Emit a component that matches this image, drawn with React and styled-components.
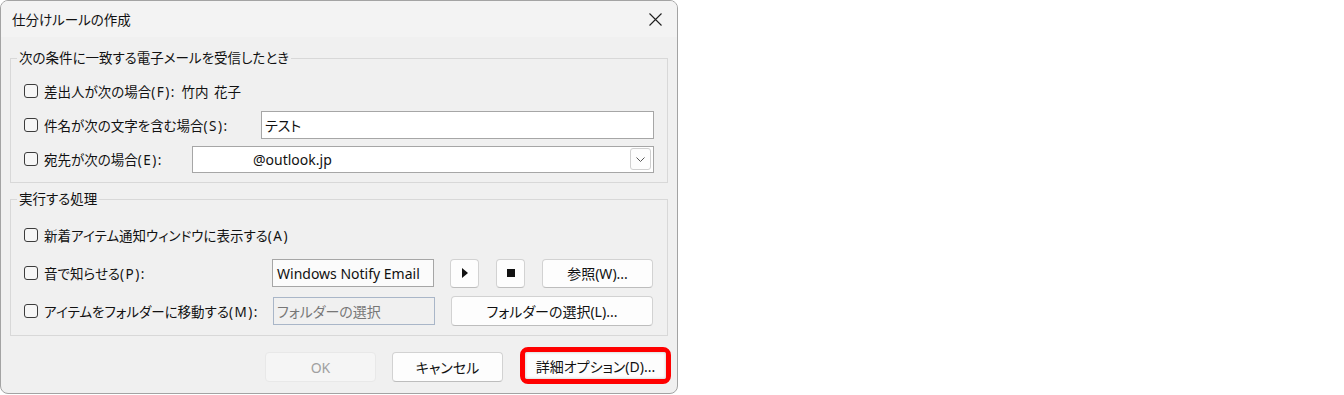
import styled, { createGlobalStyle } from 'styled-components';

const GlobalStyle = createGlobalStyle`
  html, body {
    margin: 0;
    padding: 0;
    background: #ffffff;
  }

  body {
    font-family: "Noto Sans", "Noto Sans CJK JP", sans-serif;
    color: #111111;
  }
`;

const font = `"Noto Sans", "Noto Sans CJK JP", sans-serif`;

const Dialog = styled.div`
  box-sizing: border-box;
  width: 678px;
  height: 394px;
  display: flex;
  flex-direction: column;
  background: #f0f0f0;
  border: 1px solid #a3a3a3;
  border-radius: 8px;
  overflow: hidden;
  font-family: ${font};
  font-size: 13.5px;
  font-feature-settings: "palt";
  color: #111111;
`;

const TitleBar = styled.div`
  height: 36px;
  flex: none;
  display: flex;
  align-items: center;
  justify-content: space-between;
  padding: 0 15px 0 11px;
  background: #f3f3f3;
  font-size: 13.5px;
`;

const CloseButton = styled.span`
  display: flex;
  width: 14px;
  height: 14px;
  align-items: center;
  justify-content: center;
`;

const Body = styled.div`
  flex: none;
  display: flex;
  flex-direction: column;
  gap: 7px;
  padding-top: 12px;
`;

const Group = styled.fieldset`
  margin: 0 9px;
  padding: ${(p) => p.$pad};
  border: 1px solid #d8d8d8;
  display: flex;
  flex-direction: column;
  gap: ${(p) => p.$gap}px;
  min-width: 0;
`;

const Legend = styled.legend`
  margin-left: -7px;
  padding: 0 2px;
  line-height: 18px;
`;

const Row = styled.div`
  height: ${(p) => p.$h}px;
  display: flex;
  align-items: center;
  justify-content: space-between;
`;

const CheckLabel = styled.label`
  display: flex;
  align-items: center;
  gap: 6px;
  white-space: nowrap;
  word-spacing: 2px;
`;

const Acc = styled.span`
  letter-spacing: 1.5px;
`;

const Box = styled.span`
  box-sizing: border-box;
  width: 14px;
  height: 14px;
  border: 1px solid #3c3c3c;
  border-radius: 3px;
  background: #f6f6f6;
  flex: none;
`;

const TextField = styled.div`
  box-sizing: border-box;
  width: ${(p) => p.$w}px;
  height: ${(p) => p.$h || 28}px;
  display: flex;
  align-items: center;
  justify-content: space-between;
  padding: 0 2px 0 ${(p) => p.$indent || 3}px;
  background: ${(p) => (p.$disabled ? '#f0f0f0' : p.$readonly ? '#fbfbfb' : '#ffffff')};
  border: 1px solid ${(p) => (p.$disabled ? '#a9b6c8' : '#a6a6a6')};
  color: ${(p) => (p.$disabled ? '#777777' : '#111111')};
  font-size: 14px;
  white-space: nowrap;
  overflow: hidden;
`;

const DropButton = styled.span`
  box-sizing: border-box;
  width: 21px;
  height: 22px;
  display: flex;
  align-items: center;
  justify-content: center;
  border: 1px solid #d0d0d0;
  border-radius: 3px;
  background: #fdfdfd;
`;

const Controls = styled.div`
  display: flex;
  align-items: center;
  gap: ${(p) => p.$gap || 16}px;
`;

const Button = styled.button`
  box-sizing: border-box;
  width: ${(p) => p.$w}px;
  height: ${(p) => p.$h || 29}px;
  display: flex;
  align-items: center;
  justify-content: center;
  padding: 0;
  background: ${(p) => (p.disabled ? '#f5f5f5' : '#fdfdfd')};
  border: 1px solid ${(p) => (p.disabled ? '#e8e8e8' : '#d2d2d2')};
  border-bottom-color: ${(p) => (p.disabled ? '#e8e8e8' : '#bdbdbd')};
  border-radius: 4px;
  font-family: ${font};
  font-size: 14px;
  font-feature-settings: "palt";
  color: ${(p) => (p.disabled ? '#a0a0a0' : '#111111')};
`;

const Footer = styled.div`
  display: flex;
  justify-content: flex-end;
  align-items: flex-end;
  gap: 16px;
  padding: 11px 6px 0 0;
`;

const Highlight = styled.span`
  display: flex;
  margin: 0 0 -2px 1px;
  border: 5px solid #ff0000;
  border-radius: 8px;
`;

const DetailButton = styled(Button)`
  border: none;
  border-radius: 2px;
  box-shadow: inset 0 0 3px rgba(0, 0, 0, 0.25);
`;

const Check = ({ children }) => (
  <CheckLabel>
    <Box />
    <span>{children}</span>
  </CheckLabel>
);

const CloseIcon = () => (
  <svg width="13" height="13" viewBox="0 0 13 13">
    <path d="M0.5 0.5 L12.5 12.5 M12.5 0.5 L0.5 12.5" stroke="#1f1f1f" strokeWidth="1.1" fill="none" />
  </svg>
);

const Chevron = () => (
  <svg width="9" height="5" viewBox="0 0 9 5">
    <path d="M0.5 0.5 L4.5 4.5 L8.5 0.5" stroke="#555" strokeWidth="1" fill="none" />
  </svg>
);

const PlayIcon = () => (
  <svg width="6" height="10" viewBox="0 0 6 10">
    <path d="M0 0 L6 5 L0 10 Z" fill="#111" />
  </svg>
);

const StopIcon = () => (
  <svg width="8" height="8" viewBox="0 0 8 8">
    <rect width="8" height="8" fill="#111" />
  </svg>
);

const App = () => {
  return (
    <>
      <GlobalStyle />
      <Dialog>
        <TitleBar>
          仕分けルールの作成
          <CloseButton>
            <CloseIcon />
          </CloseButton>
        </TitleBar>

        <Body>
          {/* 条件 */}
          <Group $pad="10px 13px 9px 13px" $gap={6}>
            <Legend>次の条件に一致する電子メールを受信したとき</Legend>
            <Row $h={28}>
              <Check>
                差出人が次の場合<Acc>(F):</Acc> 竹内 花子
              </Check>
            </Row>
            <Row $h={28}>
              <Check>
                件名が次の文字を含む場合<Acc>(S):</Acc>
              </Check>
              <TextField $w={393}>テスト</TextField>
            </Row>
            <Row $h={28}>
              <Check>
                宛先が次の場合<Acc>(E):</Acc>
              </Check>
              <TextField $w={462} $h={27} $indent={60}>
                @outlook.jp
                <DropButton>
                  <Chevron />
                </DropButton>
              </TextField>
            </Row>
          </Group>

          {/* 処理 */}
          <Group $pad="12px 14px 9px 13px" $gap={8}>
            <Legend>実行する処理</Legend>
            <Row $h={30}>
              <Check>
                新着アイテム通知ウィンドウに表示する<Acc>(A)</Acc>
              </Check>
            </Row>
            <Row $h={30}>
              <Check>
                音で知らせる<Acc>(P):</Acc>
              </Check>
              <Controls>
                <TextField $w={162} $readonly $indent={4}>
                  Windows Notify Email
                </TextField>
                <Controls $gap={17}>
                  <Button $w={29}>
                    <PlayIcon />
                  </Button>
                  <Button $w={29}>
                    <StopIcon />
                  </Button>
                  <Button $w={111}>参照(W)...</Button>
                </Controls>
              </Controls>
            </Row>
            <Row $h={30}>
              <Check>
                アイテムをフォルダーに移動する<Acc>(M):</Acc>
              </Check>
              <Controls>
                <TextField $w={162} $disabled $indent={3}>
                  フォルダーの選択
                </TextField>
                <Button $w={202} $h={30}>
                  フォルダーの選択(L)...
                </Button>
              </Controls>
            </Row>
          </Group>
        </Body>

        <Footer>
          <Button $w={111} $h={30} disabled>
            OK
          </Button>
          <Button $w={111} $h={30}>
            キャンセル
          </Button>
          <Highlight>
            <DetailButton $w={141} $h={27}>
              詳細オプション(D)...
            </DetailButton>
          </Highlight>
        </Footer>
      </Dialog>
    </>
  );
};

export default App;
